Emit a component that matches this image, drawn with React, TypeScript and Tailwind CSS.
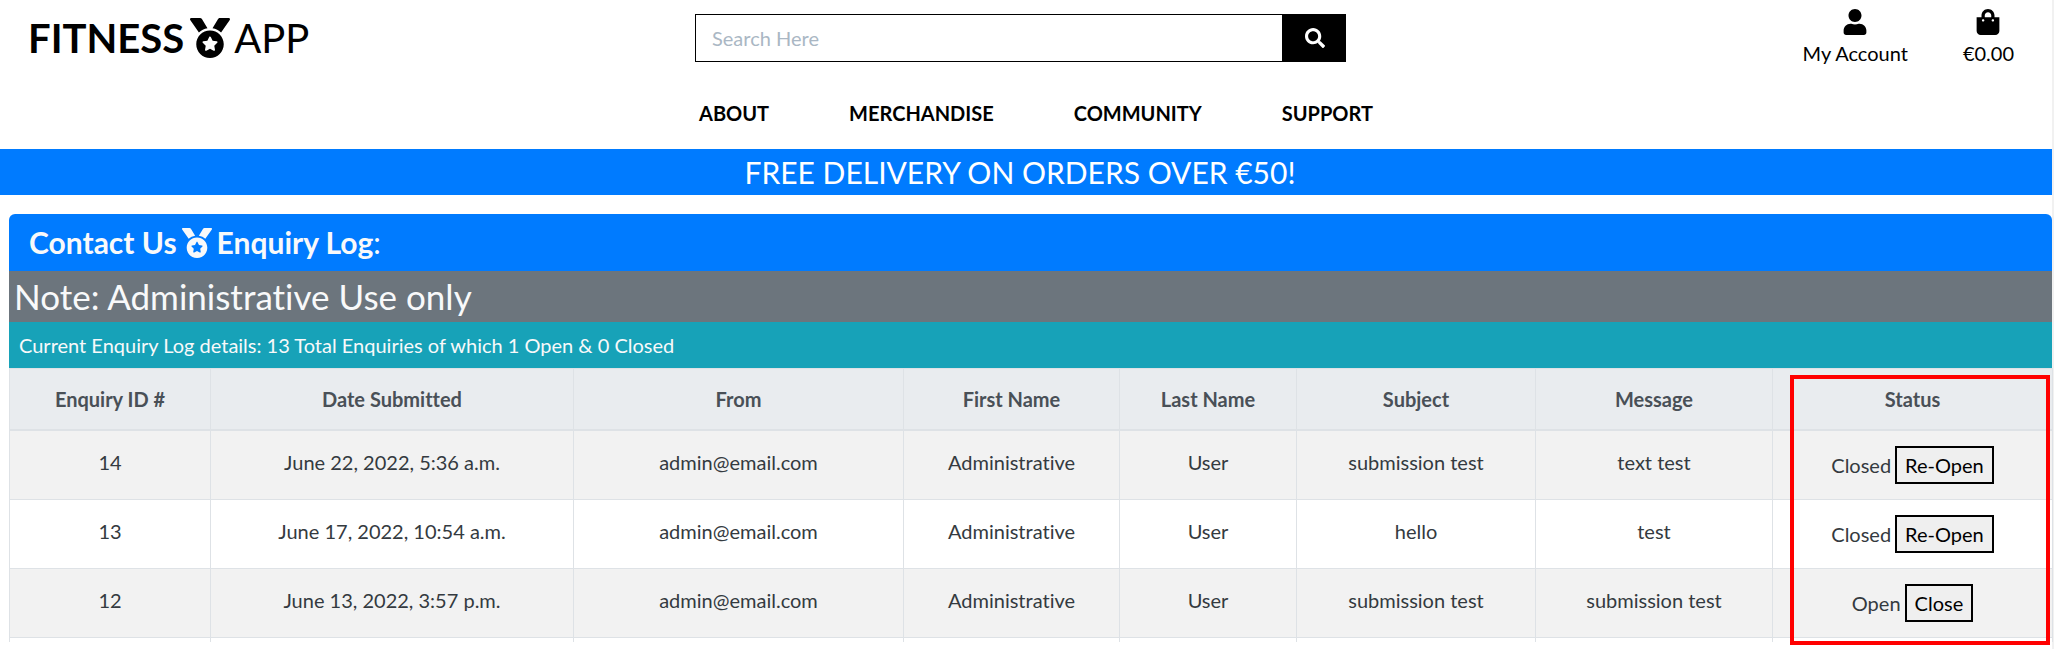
import type { ReactNode } from "react";
import { FaMedal, FaSearch, FaShoppingBag, FaUser } from "react-icons/fa";

type Enquiry = {
  id: number;
  date: string;
  from: string;
  first: string;
  last: string;
  subject: string;
  message: string;
  status: string;
  action: string;
};

const enquiries: Enquiry[] = [
  { id: 14, date: "June 22, 2022, 5:36 a.m.", from: "admin@email.com", first: "Administrative", last: "User", subject: "submission test", message: "text test", status: "Closed", action: "Re-Open" },
  { id: 13, date: "June 17, 2022, 10:54 a.m.", from: "admin@email.com", first: "Administrative", last: "User", subject: "hello", message: "test", status: "Closed", action: "Re-Open" },
  { id: 12, date: "June 13, 2022, 3:57 p.m.", from: "admin@email.com", first: "Administrative", last: "User", subject: "submission test", message: "submission test", status: "Open", action: "Close" },
];

const columns = [
  { title: "Enquiry ID #", width: "w-[201px]" },
  { title: "Date Submitted", width: "w-[363px]" },
  { title: "From", width: "w-[330px]" },
  { title: "First Name", width: "w-[216px]" },
  { title: "Last Name", width: "w-[177px]" },
  { title: "Subject", width: "w-[239px]" },
  { title: "Message", width: "w-[237px]" },
  { title: "Status", width: "w-[280px]" },
];

const navItems = ["ABOUT", "MERCHANDISE", "COMMUNITY", "SUPPORT"];

function Cell({ children }: { children: ReactNode }) {
  return <td className="border border-[#dee2e6] px-4 pt-4 pb-5 align-top">{children}</td>;
}

function Header() {
  return (
    <header>
      <div className="grid grid-cols-3 items-start">
        <a href="#" className="flex items-center pt-2 pl-7 text-[40px] leading-[60px] text-black">
          <span className="font-bold">FITNESS</span>
          <FaMedal className="ml-1.5" />
          <span className="ml-1 font-normal">APP</span>
        </a>
        <form className="mt-3.5 flex h-12 pr-[22px] pl-[11px]">
          <input
            type="search"
            aria-label="Search"
            placeholder="Search Here"
            className="min-w-0 flex-1 border border-black bg-white px-4 text-black placeholder:text-[#aab7c4]"
          />
          <button type="submit" aria-label="Submit search" className="flex w-[63px] items-center justify-center bg-black text-white">
            <FaSearch />
          </button>
        </form>
        <div className="flex justify-end gap-[55px] pt-[9px] pr-[38px] text-black">
          <a href="#" className="flex flex-col items-center">
            <FaUser className="text-[26px]" />
            <span className="leading-[37px]">My Account</span>
          </a>
          <a href="#" className="flex flex-col items-center">
            <FaShoppingBag className="text-[26px]" />
            <span className="leading-[37px]">€0.00</span>
          </a>
        </div>
      </div>
      <nav className="flex justify-center gap-20 pt-[26px] pb-[21px] pl-5 leading-[30px] font-bold text-black">
        {navItems.map((item) => (
          <a key={item} href="#">{item}</a>
        ))}
      </nav>
    </header>
  );
}

export default function App() {
  return (
    <div className="min-h-screen border-r-2 border-[#f1f1f1] bg-white font-['Lato',sans-serif] text-[20px] leading-[30px] text-[#212529] [font-variant-ligatures:none]">
      <Header />
      <p className="bg-[#007bff] pr-3 text-center text-[30px] leading-[46px] text-white">FREE DELIVERY ON ORDERS OVER €50!</p>
      <main className="mt-[19px] pl-[9px]">
        <h1 className="flex items-center rounded-t-md bg-[#007bff] px-5 text-[30px] leading-[57px] font-bold text-[#f8f9fa]">
          Contact Us
          <FaMedal className="mx-[5px]" />
          Enquiry Log<span className="font-normal">:</span>
        </h1>
        <h2 className="bg-[#6c757d] px-[5px] text-[35px] leading-[51px] text-[#f8f9fa]">Note: Administrative Use only</h2>
        <p className="bg-[#17a2b8] px-2.5 leading-[46px] text-[#f8f9fa]">
          Current Enquiry Log details: 13 Total Enquiries of which 1 Open &amp; 0 Closed
        </p>
        <div className="relative">
          <table className="w-full table-fixed border-collapse text-center text-[#343a40]">
            <thead>
              <tr className="bg-[#e9ecef] text-[#495057]">
                {columns.map((column) => (
                  <th key={column.title} scope="col" className={`${column.width} border border-b-2 border-[#dee2e6] px-4 py-[15px] font-bold`}>
                    {column.title}
                  </th>
                ))}
              </tr>
            </thead>
            <tbody>
              {enquiries.map((row) => (
                <tr key={row.id} className="h-[69px] odd:bg-[#f2f2f2]">
                  <Cell>{row.id}</Cell>
                  <Cell>{row.date}</Cell>
                  <Cell>{row.from}</Cell>
                  <Cell>{row.first}</Cell>
                  <Cell>{row.last}</Cell>
                  <Cell>{row.subject}</Cell>
                  <Cell>{row.message}</Cell>
                  <td className="border border-[#dee2e6] p-0 align-middle">
                    <div className="flex items-center justify-center gap-1">
                      {row.status}
                      <button type="button" className="h-[38px] border-2 border-black bg-[#efefef] px-2 text-black">
                        {row.action}
                      </button>
                    </div>
                  </td>
                </tr>
              ))}
              <tr className="h-[5px]" aria-hidden="true">
                {columns.map((column) => (
                  <td key={column.title} className="border-x border-[#dee2e6] p-0" />
                ))}
              </tr>
            </tbody>
          </table>
          <div className="pointer-events-none absolute top-[7px] right-0.5 h-[270px] w-[260px] border-4 border-[#ff0000]" />
        </div>
      </main>
    </div>
  );
}
